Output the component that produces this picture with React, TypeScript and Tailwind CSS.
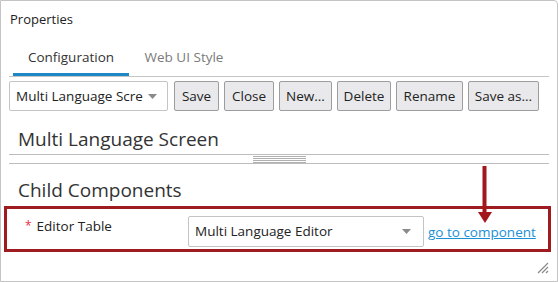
import React from "react";

const font = "font-['Open_Sans','Noto_Sans',sans-serif]";

const buttons: { label: string; w: string }[] = [
  { label: "Save", w: "w-[45px]" },
  { label: "Close", w: "w-[50px]" },
  { label: "New...", w: "w-[53px]" },
  { label: "Delete", w: "w-[54px]" },
  { label: "Rename", w: "w-[67px]" },
  { label: "Save as...", w: "w-[71px]" },
];

const Caret: React.FC = () => (
  <svg width="9" height="5" viewBox="0 0 9 5" className="shrink-0">
    <path d="M0 0h9L4.5 5z" fill="#8a8a8a" />
  </svg>
);

const App: React.FC = () => {
  return (
    <div className={`w-[558px] h-[282px] bg-white ${font} text-[#222]`}>
      <div className="relative w-full h-full border border-[#c4c4c4] rounded-tr-[4px] overflow-hidden">

        {/* header */}
        <div className="px-[9px] pt-[9px] text-[13px] leading-[18px]">Properties</div>

        {/* tabs */}
        <div className="mx-[8px] mt-[13px] flex border-b border-[#c4c4c4] text-[13.5px]">
          <div className="ml-[4px] w-[116px] h-[35px] flex items-center justify-center border-b-[3px] border-[#1e88c7] text-[#333]">
            Configuration
          </div>
          <div className="w-[110px] h-[35px] flex items-center justify-center text-[#7a7a7a] pb-[3px]">
            Web UI Style
          </div>
        </div>

        {/* toolbar */}
        <div className="mx-[8px] mt-[4px] flex items-center gap-[5px] text-[13.5px]">
          <div className="w-[159px] h-[30px] mr-[1px] border border-[#c4c4c4] rounded-[2px] flex items-center justify-between pl-[6px] pr-[10px]">
            <span className="whitespace-nowrap overflow-hidden">Multi Language Scre</span>
            <Caret />
          </div>
          {buttons.map((b) => (
            <div
              key={b.label}
              className={`${b.w} h-[30px] flex items-center justify-center bg-[#e9e9ec] border border-[#9d9d9d] rounded-[2px] whitespace-nowrap`}
            >
              {b.label}
            </div>
          ))}
        </div>

        {/* screen section */}
        <div className="mx-[8px] mt-[13px]">
          <div className="px-[9px] text-[19px] leading-[30px] border-b border-[#bdbdbd] text-[#333]">
            Multi Language Screen
          </div>
          <div className="h-[9px] flex items-center justify-center border-b border-[#bdbdbd]">
            <div className="w-[53px] flex flex-col gap-[1px]">
              <div className="h-px bg-[#b0b0b0]" />
              <div className="h-px bg-[#b0b0b0]" />
              <div className="h-px bg-[#b0b0b0]" />
              <div className="h-px bg-[#b0b0b0]" />
            </div>
          </div>
        </div>

        {/* child components */}
        <div className="px-[17px] mt-[12px] text-[19px] leading-[28px] text-[#333]">Child Components</div>

        <div className="mx-[3px] mt-[2px] w-[547px] h-[46px] border-[3px] border-[#9e1b20] flex items-start">
          <div className="w-[181px] pl-[18px] pt-[8px] text-[13.5px] leading-[18px] flex items-start">
            <span className="text-[#e0303f] mr-[5px] text-[12px]">*</span>
            <span>Editor Table</span>
          </div>
          <div className="mt-[7px] w-[236px] h-[31px] border border-[#c4c4c4] rounded-[2px] flex items-center justify-between pl-[6px] pr-[12px] text-[13.5px]">
            <span>Multi Language Editor</span>
            <Caret />
          </div>
          <a className="ml-[4px] mt-[14px] text-[13.5px] leading-[18px] text-[#1b8fd6] underline whitespace-nowrap">
            go to component
          </a>
        </div>

        {/* annotation arrow */}
        <svg className="absolute left-[476px] top-[165px]" width="16" height="58" viewBox="0 0 16 58">
          <rect x="5.5" y="0" width="4" height="47" fill="#a3161b" />
          <path d="M1 46h14l-7 11z" fill="#a3161b" />
        </svg>

        {/* resize grip */}
        <svg className="absolute left-[536px] top-[261px]" width="12" height="12" viewBox="0 0 12 12">
          <path d="M11 1L1 11M11 5L5 11M11 9L9 11" stroke="#8a8a8a" strokeWidth="1.2" />
        </svg>
      </div>
    </div>
  );
};

export default App;
